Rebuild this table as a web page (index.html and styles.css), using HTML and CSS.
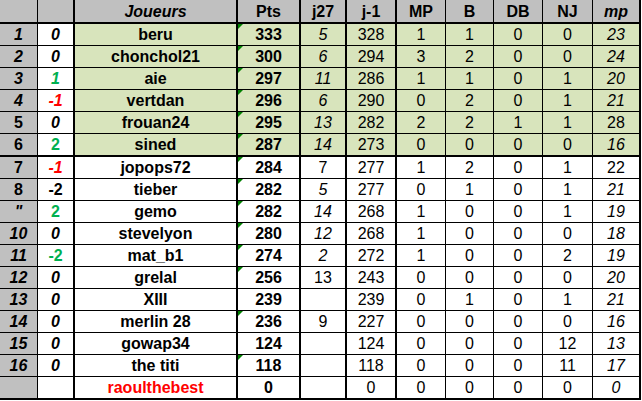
FILE: index.html
```html
<!DOCTYPE html>
<html lang="fr">
<head>
<meta charset="utf-8">
<title>Classement</title>
<link rel="stylesheet" href="styles.css">
</head>
<body>
<div class="board">
  <div class="row head">
    <div class="c"></div><div class="c"></div><div class="c b i">Joueurs</div><div class="c b">Pts</div><div class="c b">j27</div><div class="c b">j-1</div><div class="c b">MP</div><div class="c b">B</div><div class="c b">DB</div><div class="c b">NJ</div><div class="c b i">mp</div>
  </div>
  <div class="row top">
    <div class="c b i">1</div><div class="c b i">0</div><div class="c b">beru</div><div class="c b mark">333</div><div class="c i">5</div><div class="c">328</div><div class="c">1</div><div class="c">1</div><div class="c">0</div><div class="c">0</div><div class="c i">23</div>
  </div>
  <div class="row top">
    <div class="c b i">2</div><div class="c b i">0</div><div class="c b">chonchol21</div><div class="c b mark">300</div><div class="c i">6</div><div class="c">294</div><div class="c">3</div><div class="c">2</div><div class="c">0</div><div class="c">0</div><div class="c i">24</div>
  </div>
  <div class="row top">
    <div class="c b i">3</div><div class="c b i up">1</div><div class="c b">aie</div><div class="c b mark">297</div><div class="c i">11</div><div class="c">286</div><div class="c">1</div><div class="c">1</div><div class="c">0</div><div class="c">1</div><div class="c i">20</div>
  </div>
  <div class="row top">
    <div class="c b i">4</div><div class="c b i down">-1</div><div class="c b">vertdan</div><div class="c b mark">296</div><div class="c i">6</div><div class="c">290</div><div class="c">0</div><div class="c">2</div><div class="c">0</div><div class="c">1</div><div class="c i">21</div>
  </div>
  <div class="row top">
    <div class="c b">5</div><div class="c b i">0</div><div class="c b">frouan24</div><div class="c b mark">295</div><div class="c i">13</div><div class="c">282</div><div class="c">2</div><div class="c">2</div><div class="c">1</div><div class="c">1</div><div class="c">28</div>
  </div>
  <div class="row top split">
    <div class="c b">6</div><div class="c b up">2</div><div class="c b">sined</div><div class="c b mark">287</div><div class="c i">14</div><div class="c">273</div><div class="c">0</div><div class="c">0</div><div class="c">0</div><div class="c">0</div><div class="c i">16</div>
  </div>
  <div class="row">
    <div class="c b">7</div><div class="c b i down">-1</div><div class="c b">jopops72</div><div class="c b mark">284</div><div class="c">7</div><div class="c">277</div><div class="c">1</div><div class="c">2</div><div class="c">0</div><div class="c">1</div><div class="c">22</div>
  </div>
  <div class="row">
    <div class="c b">8</div><div class="c b">-2</div><div class="c b">tieber</div><div class="c b mark">282</div><div class="c i">5</div><div class="c">277</div><div class="c">0</div><div class="c">1</div><div class="c">0</div><div class="c">1</div><div class="c i">21</div>
  </div>
  <div class="row">
    <div class="c b i">"</div><div class="c b up">2</div><div class="c b">gemo</div><div class="c b mark">282</div><div class="c i">14</div><div class="c">268</div><div class="c">1</div><div class="c">0</div><div class="c">0</div><div class="c">1</div><div class="c i">19</div>
  </div>
  <div class="row">
    <div class="c b i">10</div><div class="c b i">0</div><div class="c b">stevelyon</div><div class="c b mark">280</div><div class="c i">12</div><div class="c">268</div><div class="c">1</div><div class="c">0</div><div class="c">0</div><div class="c">0</div><div class="c i">18</div>
  </div>
  <div class="row">
    <div class="c b i">11</div><div class="c b up">-2</div><div class="c b">mat_b1</div><div class="c b mark">274</div><div class="c i">2</div><div class="c">272</div><div class="c">1</div><div class="c">0</div><div class="c">0</div><div class="c">2</div><div class="c i">19</div>
  </div>
  <div class="row">
    <div class="c b i">12</div><div class="c b i">0</div><div class="c b">grelal</div><div class="c b mark">256</div><div class="c">13</div><div class="c">243</div><div class="c">0</div><div class="c">0</div><div class="c">0</div><div class="c">0</div><div class="c i">20</div>
  </div>
  <div class="row">
    <div class="c b i">13</div><div class="c b i">0</div><div class="c b">XIII</div><div class="c b">239</div><div class="c"></div><div class="c">239</div><div class="c">0</div><div class="c">1</div><div class="c">0</div><div class="c">1</div><div class="c i">21</div>
  </div>
  <div class="row">
    <div class="c b i">14</div><div class="c b i">0</div><div class="c b">merlin 28</div><div class="c b mark">236</div><div class="c">9</div><div class="c">227</div><div class="c">0</div><div class="c">0</div><div class="c">0</div><div class="c">0</div><div class="c i">16</div>
  </div>
  <div class="row">
    <div class="c b i">15</div><div class="c b i">0</div><div class="c b">gowap34</div><div class="c b">124</div><div class="c"></div><div class="c">124</div><div class="c">0</div><div class="c">0</div><div class="c">0</div><div class="c">12</div><div class="c i">13</div>
  </div>
  <div class="row">
    <div class="c b i">16</div><div class="c b i">0</div><div class="c b">the titi</div><div class="c b mark">118</div><div class="c"></div><div class="c">118</div><div class="c">0</div><div class="c">0</div><div class="c">0</div><div class="c">11</div><div class="c i">17</div>
  </div>
  <div class="row last">
    <div class="c"></div><div class="c"></div><div class="c b down">raoulthebest</div><div class="c b">0</div><div class="c"></div><div class="c">0</div><div class="c">0</div><div class="c">0</div><div class="c">0</div><div class="c">0</div><div class="c i">0</div>
  </div>
</div>
</body>
</html>
```
FILE: styles.css
```css
html, body {
  margin: 0;
  padding: 0;
  background: #ffffff;
}

.board {
  width: 641px;
  font-family: "Liberation Sans", Arial, sans-serif;
  font-size: 16px;
  color: #000000;
}

.row {
  display: grid;
  grid-template-columns: 38px 37px 163px 63px 46px 50px 49px 48px 49px 50px 48px;
  height: 22px;
  background: #ffffff;
}

.row > .c {
  box-sizing: border-box;
  position: relative;
  display: flex;
  align-items: center;
  justify-content: center;
  border-right: 1px solid #000000;
  border-bottom: 1px solid #000000;
  white-space: nowrap;
  line-height: 1;
  padding-top: 1px;
}

/* thick column separators */
.row > .c:nth-child(2),
.row > .c:nth-child(3),
.row > .c:nth-child(4),
.row > .c:nth-child(5),
.row > .c:nth-child(6),
.row > .c:nth-child(11) {
  border-right-width: 2px;
}

/* grey rank column */
.row > .c:nth-child(1) {
  background: #c0c0c0;
}

.row.head {
  height: 24px;
  background: #c0c0c0;
}

.row.head > .c {
  border-bottom-width: 2px;
}

.row.top > .c:nth-child(n+3) {
  background: #d8e4bc;
}

.row.split,
.row.last {
  height: 23px;
}

.row.split > .c,
.row.last > .c {
  border-bottom-width: 2px;
}

.b {
  font-weight: bold;
}

.i {
  font-style: italic;
}

.up {
  color: #00b050;
}

.down {
  color: #ff0000;
}

.mark::before {
  content: "";
  position: absolute;
  top: 0;
  left: 0;
  width: 0;
  height: 0;
  border-top: 5px solid #008000;
  border-right: 5px solid transparent;
}
```
